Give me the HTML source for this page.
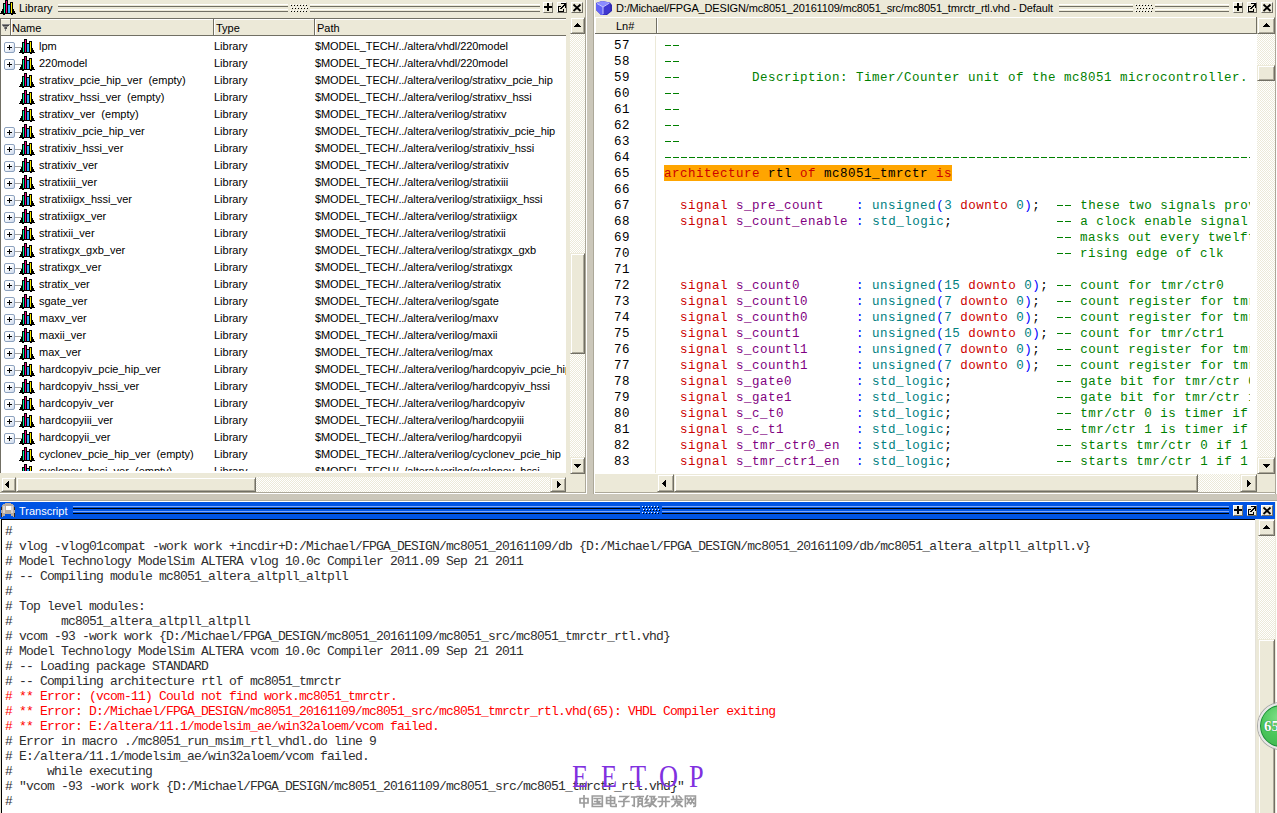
<!DOCTYPE html><html><head><meta charset="utf-8"><style>
html,body{margin:0;padding:0}
body{width:1277px;height:813px;position:relative;overflow:hidden;background:#ECE9D8;font-family:"Liberation Sans",sans-serif}
.s{position:absolute;font-family:"Liberation Sans",sans-serif;font-size:11px;line-height:13px;white-space:pre;color:#000}
.m{position:absolute;font-family:"Liberation Mono",monospace;font-size:12.5px;letter-spacing:0.5px;line-height:16px;white-space:pre}
.t{position:absolute;font-family:"Liberation Mono",monospace;font-size:13px;letter-spacing:-0.8px;line-height:15px;white-space:pre;color:#2e2e2e}
.btn{position:absolute;box-sizing:border-box;background:#ECE9D8;border-style:solid;border-width:1px;border-color:#ECE9D8 #716F64 #716F64 #ECE9D8;box-shadow:inset 1px 1px 0 #fff,inset -1px -1px 0 #ACA899}
.track{background-color:#F4F2EA;background-image:repeating-conic-gradient(#ECE9D8 0 25%,#fff 0 50%);background-size:2px 2px}
.dash{display:inline-block;vertical-align:top;height:15px;background:repeating-linear-gradient(to right,transparent 0 1px,#008000 1px 7px,transparent 7px 8px) 0 7px/8px 1px repeat-x}
.kw{color:#CC0000}.id{color:#800080}.ty{color:#008080}.op{color:#0000FF}.cm{color:#008000}.bk{color:#000}
</style></head><body>
<svg style="position:absolute;left:0px;top:0px" width="16" height="16" shape-rendering="crispEdges"><rect x="3" y="3" width="3" height="10" fill="#000"/><rect x="5" y="0" width="3" height="13" fill="#000"/><rect x="7" y="4" width="4" height="9" fill="#000"/><rect x="10" y="2" width="3" height="11" fill="#000"/><rect x="2" y="9" width="12" height="4" fill="#000"/><rect x="1" y="11" width="14" height="2" fill="#000"/><rect x="0" y="13" width="16" height="1" fill="#000"/><rect x="3" y="14" width="2" height="1" fill="#000"/><rect x="11" y="14" width="2" height="1" fill="#000"/><rect x="4" y="4" width="1" height="9" fill="#00F0A0"/><rect x="6" y="1" width="1" height="12" fill="#F0007F"/><rect x="8" y="5" width="2" height="8" fill="#30A8F8"/><rect x="11" y="3" width="1" height="10" fill="#FFF000"/></svg>
<div class="s" style="left:19px;top:2px;">Library</div>
<div style="position:absolute;left:58px;top:4px;width:230px;height:1px;background:#FFFFFF;"></div>
<div style="position:absolute;left:58px;top:6px;width:230px;height:1px;background:#716F64;"></div>
<div style="position:absolute;left:58px;top:9px;width:230px;height:1px;background:#FFFFFF;"></div>
<div style="position:absolute;left:58px;top:11px;width:230px;height:1px;background:#716F64;"></div>
<div style="position:absolute;left:310px;top:4px;width:230px;height:1px;background:#FFFFFF;"></div>
<div style="position:absolute;left:310px;top:6px;width:230px;height:1px;background:#716F64;"></div>
<div style="position:absolute;left:310px;top:9px;width:230px;height:1px;background:#FFFFFF;"></div>
<div style="position:absolute;left:310px;top:11px;width:230px;height:1px;background:#716F64;"></div>
<div style="position:absolute;left:290px;top:4px;width:1px;height:1px;background:#fff;"></div>
<div style="position:absolute;left:291px;top:5px;width:1px;height:1px;background:#000;"></div>
<div style="position:absolute;left:293px;top:4px;width:1px;height:1px;background:#fff;"></div>
<div style="position:absolute;left:294px;top:5px;width:1px;height:1px;background:#000;"></div>
<div style="position:absolute;left:296px;top:4px;width:1px;height:1px;background:#fff;"></div>
<div style="position:absolute;left:297px;top:5px;width:1px;height:1px;background:#000;"></div>
<div style="position:absolute;left:299px;top:4px;width:1px;height:1px;background:#fff;"></div>
<div style="position:absolute;left:300px;top:5px;width:1px;height:1px;background:#000;"></div>
<div style="position:absolute;left:302px;top:4px;width:1px;height:1px;background:#fff;"></div>
<div style="position:absolute;left:303px;top:5px;width:1px;height:1px;background:#000;"></div>
<div style="position:absolute;left:305px;top:4px;width:1px;height:1px;background:#fff;"></div>
<div style="position:absolute;left:306px;top:5px;width:1px;height:1px;background:#000;"></div>
<div style="position:absolute;left:291px;top:7px;width:1px;height:1px;background:#fff;"></div>
<div style="position:absolute;left:292px;top:8px;width:1px;height:1px;background:#000;"></div>
<div style="position:absolute;left:294px;top:7px;width:1px;height:1px;background:#fff;"></div>
<div style="position:absolute;left:295px;top:8px;width:1px;height:1px;background:#000;"></div>
<div style="position:absolute;left:297px;top:7px;width:1px;height:1px;background:#fff;"></div>
<div style="position:absolute;left:298px;top:8px;width:1px;height:1px;background:#000;"></div>
<div style="position:absolute;left:300px;top:7px;width:1px;height:1px;background:#fff;"></div>
<div style="position:absolute;left:301px;top:8px;width:1px;height:1px;background:#000;"></div>
<div style="position:absolute;left:303px;top:7px;width:1px;height:1px;background:#fff;"></div>
<div style="position:absolute;left:304px;top:8px;width:1px;height:1px;background:#000;"></div>
<div style="position:absolute;left:306px;top:7px;width:1px;height:1px;background:#fff;"></div>
<div style="position:absolute;left:307px;top:8px;width:1px;height:1px;background:#000;"></div>
<div style="position:absolute;left:290px;top:10px;width:1px;height:1px;background:#fff;"></div>
<div style="position:absolute;left:291px;top:11px;width:1px;height:1px;background:#000;"></div>
<div style="position:absolute;left:293px;top:10px;width:1px;height:1px;background:#fff;"></div>
<div style="position:absolute;left:294px;top:11px;width:1px;height:1px;background:#000;"></div>
<div style="position:absolute;left:296px;top:10px;width:1px;height:1px;background:#fff;"></div>
<div style="position:absolute;left:297px;top:11px;width:1px;height:1px;background:#000;"></div>
<div style="position:absolute;left:299px;top:10px;width:1px;height:1px;background:#fff;"></div>
<div style="position:absolute;left:300px;top:11px;width:1px;height:1px;background:#000;"></div>
<div style="position:absolute;left:302px;top:10px;width:1px;height:1px;background:#fff;"></div>
<div style="position:absolute;left:303px;top:11px;width:1px;height:1px;background:#000;"></div>
<div style="position:absolute;left:305px;top:10px;width:1px;height:1px;background:#fff;"></div>
<div style="position:absolute;left:306px;top:11px;width:1px;height:1px;background:#000;"></div>
<div style="position:absolute;left:543px;top:2px;width:10px;height:11px;box-sizing:border-box;background:#ECE9D8;border-top:1px solid #fff;border-left:1px solid #fff;border-right:1px solid #716F64;border-bottom:1px solid #716F64"></div>
<div style="position:absolute;left:544px;top:6px;width:8px;height:2px;background:#000;"></div>
<div style="position:absolute;left:547px;top:3px;width:2px;height:8px;background:#000;"></div>
<div style="position:absolute;left:557px;top:2px;width:10px;height:11px;box-sizing:border-box;background:#ECE9D8;border-top:1px solid #fff;border-left:1px solid #fff;border-right:1px solid #716F64;border-bottom:1px solid #716F64"></div>
<svg style="position:absolute;left:557px;top:2px" width="10" height="11" shape-rendering="crispEdges"><path d="M1 4h3v1h-2v4h4v-2h1v3h-6z" fill="#000"/><rect x="1" y="4" width="1" height="6" fill="#000"/><rect x="1" y="9" width="6" height="1" fill="#000"/><rect x="3" y="6" width="1" height="1" fill="#000"/><path d="M4 1h5v5h-1v-3l-4 4v-1l3-4h-3z" fill="#000"/><rect x="7" y="1" width="2" height="2" fill="#000"/></svg>
<div style="position:absolute;left:571px;top:2px;width:12px;height:11px;box-sizing:border-box;background:#ECE9D8;border-top:1px solid #fff;border-left:1px solid #fff;border-right:1px solid #716F64;border-bottom:1px solid #716F64"></div>
<svg style="position:absolute;left:571px;top:2px" width="12" height="11"><path d="M2.5 2.5 L9.5 9 M9.5 2.5 L2.5 9" stroke="#000" stroke-width="1.8"/></svg>
<div style="position:absolute;left:1px;top:19px;width:565px;height:454px;background:#fff;"></div>
<div style="position:absolute;left:0px;top:18px;width:1px;height:455px;background:#716F64;"></div>
<div style="position:absolute;left:1px;top:18px;width:565px;height:18px;background:#ECE9D8;"></div>
<div style="position:absolute;left:0px;top:18px;width:566px;height:1px;background:#716F64;"></div>
<div style="position:absolute;left:1px;top:19px;width:565px;height:1px;background:#fff;"></div>
<div style="position:absolute;left:1px;top:35px;width:565px;height:1px;background:#716F64;"></div>
<div style="position:absolute;left:10px;top:19px;width:1px;height:16px;background:#716F64;"></div>
<div style="position:absolute;left:11px;top:20px;width:1px;height:15px;background:#fff;"></div>
<div style="position:absolute;left:213px;top:19px;width:1px;height:16px;background:#716F64;"></div>
<div style="position:absolute;left:214px;top:20px;width:1px;height:15px;background:#fff;"></div>
<div style="position:absolute;left:314px;top:19px;width:1px;height:16px;background:#716F64;"></div>
<div style="position:absolute;left:315px;top:20px;width:1px;height:15px;background:#fff;"></div>
<svg style="position:absolute;left:2px;top:24px" width="8" height="7" shape-rendering="crispEdges"><path d="M0 0H8V1H7V2H6V3H5V5H4V7H3V5H2V3H1V2H0Z" fill="#8A8A8A"/><rect x="1" y="1" width="6" height="1" fill="#444"/><rect x="3" y="3" width="2" height="2" fill="#555"/></svg>
<div class="s" style="left:12px;top:22px;">Name</div>
<div class="s" style="left:216px;top:22px;">Type</div>
<div class="s" style="left:317px;top:22px;">Path</div>
<div style="position:absolute;left:1px;top:36px;width:565px;height:435px;overflow:hidden">
<div style="position:absolute;left:3px;top:6px;width:11px;height:11px;box-sizing:border-box;border:1px solid #8DA2BF;border-radius:2px;background:linear-gradient(135deg,#fff 35%,#C9D6EA)"></div>
<div style="position:absolute;left:6px;top:11px;width:5px;height:1px;background:#000;"></div>
<div style="position:absolute;left:8px;top:9px;width:1px;height:5px;background:#000;"></div>
<div style="position:absolute;left:14px;top:11px;width:7px;height:1px;background:#A0A0A0;"></div>
<svg style="position:absolute;left:18px;top:3px" width="16" height="16" shape-rendering="crispEdges"><rect x="3" y="3" width="3" height="10" fill="#000"/><rect x="5" y="0" width="3" height="13" fill="#000"/><rect x="7" y="4" width="4" height="9" fill="#000"/><rect x="10" y="2" width="3" height="11" fill="#000"/><rect x="2" y="9" width="12" height="4" fill="#000"/><rect x="1" y="11" width="14" height="2" fill="#000"/><rect x="0" y="13" width="16" height="1" fill="#000"/><rect x="3" y="14" width="2" height="1" fill="#000"/><rect x="11" y="14" width="2" height="1" fill="#000"/><rect x="4" y="4" width="1" height="9" fill="#00F0A0"/><rect x="6" y="1" width="1" height="12" fill="#F0007F"/><rect x="8" y="5" width="2" height="8" fill="#30A8F8"/><rect x="11" y="3" width="1" height="10" fill="#FFF000"/></svg>
<div class="s" style="left:38px;top:4px;">lpm</div>
<div class="s" style="left:213px;top:4px;">Library</div>
<div class="s" style="left:314px;top:4px;letter-spacing:-0.08px">$MODEL_TECH/../altera/vhdl/220model</div>
<div style="position:absolute;left:3px;top:23px;width:11px;height:11px;box-sizing:border-box;border:1px solid #8DA2BF;border-radius:2px;background:linear-gradient(135deg,#fff 35%,#C9D6EA)"></div>
<div style="position:absolute;left:6px;top:28px;width:5px;height:1px;background:#000;"></div>
<div style="position:absolute;left:8px;top:26px;width:1px;height:5px;background:#000;"></div>
<div style="position:absolute;left:14px;top:28px;width:7px;height:1px;background:#A0A0A0;"></div>
<svg style="position:absolute;left:18px;top:20px" width="16" height="16" shape-rendering="crispEdges"><rect x="3" y="3" width="3" height="10" fill="#000"/><rect x="5" y="0" width="3" height="13" fill="#000"/><rect x="7" y="4" width="4" height="9" fill="#000"/><rect x="10" y="2" width="3" height="11" fill="#000"/><rect x="2" y="9" width="12" height="4" fill="#000"/><rect x="1" y="11" width="14" height="2" fill="#000"/><rect x="0" y="13" width="16" height="1" fill="#000"/><rect x="3" y="14" width="2" height="1" fill="#000"/><rect x="11" y="14" width="2" height="1" fill="#000"/><rect x="4" y="4" width="1" height="9" fill="#00F0A0"/><rect x="6" y="1" width="1" height="12" fill="#F0007F"/><rect x="8" y="5" width="2" height="8" fill="#30A8F8"/><rect x="11" y="3" width="1" height="10" fill="#FFF000"/></svg>
<div class="s" style="left:38px;top:21px;">220model</div>
<div class="s" style="left:213px;top:21px;">Library</div>
<div class="s" style="left:314px;top:21px;letter-spacing:-0.08px">$MODEL_TECH/../altera/vhdl/220model</div>
<svg style="position:absolute;left:18px;top:37px" width="16" height="16" shape-rendering="crispEdges"><rect x="3" y="3" width="3" height="10" fill="#000"/><rect x="5" y="0" width="3" height="13" fill="#000"/><rect x="7" y="4" width="4" height="9" fill="#000"/><rect x="10" y="2" width="3" height="11" fill="#000"/><rect x="2" y="9" width="12" height="4" fill="#000"/><rect x="1" y="11" width="14" height="2" fill="#000"/><rect x="0" y="13" width="16" height="1" fill="#000"/><rect x="3" y="14" width="2" height="1" fill="#000"/><rect x="11" y="14" width="2" height="1" fill="#000"/><rect x="4" y="4" width="1" height="9" fill="#00F0A0"/><rect x="6" y="1" width="1" height="12" fill="#F0007F"/><rect x="8" y="5" width="2" height="8" fill="#30A8F8"/><rect x="11" y="3" width="1" height="10" fill="#FFF000"/></svg>
<div class="s" style="left:38px;top:38px;">stratixv_pcie_hip_ver  (empty)</div>
<div class="s" style="left:213px;top:38px;">Library</div>
<div class="s" style="left:314px;top:38px;letter-spacing:-0.08px">$MODEL_TECH/../altera/verilog/stratixv_pcie_hip</div>
<svg style="position:absolute;left:18px;top:54px" width="16" height="16" shape-rendering="crispEdges"><rect x="3" y="3" width="3" height="10" fill="#000"/><rect x="5" y="0" width="3" height="13" fill="#000"/><rect x="7" y="4" width="4" height="9" fill="#000"/><rect x="10" y="2" width="3" height="11" fill="#000"/><rect x="2" y="9" width="12" height="4" fill="#000"/><rect x="1" y="11" width="14" height="2" fill="#000"/><rect x="0" y="13" width="16" height="1" fill="#000"/><rect x="3" y="14" width="2" height="1" fill="#000"/><rect x="11" y="14" width="2" height="1" fill="#000"/><rect x="4" y="4" width="1" height="9" fill="#00F0A0"/><rect x="6" y="1" width="1" height="12" fill="#F0007F"/><rect x="8" y="5" width="2" height="8" fill="#30A8F8"/><rect x="11" y="3" width="1" height="10" fill="#FFF000"/></svg>
<div class="s" style="left:38px;top:55px;">stratixv_hssi_ver  (empty)</div>
<div class="s" style="left:213px;top:55px;">Library</div>
<div class="s" style="left:314px;top:55px;letter-spacing:-0.08px">$MODEL_TECH/../altera/verilog/stratixv_hssi</div>
<svg style="position:absolute;left:18px;top:71px" width="16" height="16" shape-rendering="crispEdges"><rect x="3" y="3" width="3" height="10" fill="#000"/><rect x="5" y="0" width="3" height="13" fill="#000"/><rect x="7" y="4" width="4" height="9" fill="#000"/><rect x="10" y="2" width="3" height="11" fill="#000"/><rect x="2" y="9" width="12" height="4" fill="#000"/><rect x="1" y="11" width="14" height="2" fill="#000"/><rect x="0" y="13" width="16" height="1" fill="#000"/><rect x="3" y="14" width="2" height="1" fill="#000"/><rect x="11" y="14" width="2" height="1" fill="#000"/><rect x="4" y="4" width="1" height="9" fill="#00F0A0"/><rect x="6" y="1" width="1" height="12" fill="#F0007F"/><rect x="8" y="5" width="2" height="8" fill="#30A8F8"/><rect x="11" y="3" width="1" height="10" fill="#FFF000"/></svg>
<div class="s" style="left:38px;top:72px;">stratixv_ver  (empty)</div>
<div class="s" style="left:213px;top:72px;">Library</div>
<div class="s" style="left:314px;top:72px;letter-spacing:-0.08px">$MODEL_TECH/../altera/verilog/stratixv</div>
<div style="position:absolute;left:3px;top:91px;width:11px;height:11px;box-sizing:border-box;border:1px solid #8DA2BF;border-radius:2px;background:linear-gradient(135deg,#fff 35%,#C9D6EA)"></div>
<div style="position:absolute;left:6px;top:96px;width:5px;height:1px;background:#000;"></div>
<div style="position:absolute;left:8px;top:94px;width:1px;height:5px;background:#000;"></div>
<div style="position:absolute;left:14px;top:96px;width:7px;height:1px;background:#A0A0A0;"></div>
<svg style="position:absolute;left:18px;top:88px" width="16" height="16" shape-rendering="crispEdges"><rect x="3" y="3" width="3" height="10" fill="#000"/><rect x="5" y="0" width="3" height="13" fill="#000"/><rect x="7" y="4" width="4" height="9" fill="#000"/><rect x="10" y="2" width="3" height="11" fill="#000"/><rect x="2" y="9" width="12" height="4" fill="#000"/><rect x="1" y="11" width="14" height="2" fill="#000"/><rect x="0" y="13" width="16" height="1" fill="#000"/><rect x="3" y="14" width="2" height="1" fill="#000"/><rect x="11" y="14" width="2" height="1" fill="#000"/><rect x="4" y="4" width="1" height="9" fill="#00F0A0"/><rect x="6" y="1" width="1" height="12" fill="#F0007F"/><rect x="8" y="5" width="2" height="8" fill="#30A8F8"/><rect x="11" y="3" width="1" height="10" fill="#FFF000"/></svg>
<div class="s" style="left:38px;top:89px;">stratixiv_pcie_hip_ver</div>
<div class="s" style="left:213px;top:89px;">Library</div>
<div class="s" style="left:314px;top:89px;letter-spacing:-0.08px">$MODEL_TECH/../altera/verilog/stratixiv_pcie_hip</div>
<div style="position:absolute;left:3px;top:108px;width:11px;height:11px;box-sizing:border-box;border:1px solid #8DA2BF;border-radius:2px;background:linear-gradient(135deg,#fff 35%,#C9D6EA)"></div>
<div style="position:absolute;left:6px;top:113px;width:5px;height:1px;background:#000;"></div>
<div style="position:absolute;left:8px;top:111px;width:1px;height:5px;background:#000;"></div>
<div style="position:absolute;left:14px;top:113px;width:7px;height:1px;background:#A0A0A0;"></div>
<svg style="position:absolute;left:18px;top:105px" width="16" height="16" shape-rendering="crispEdges"><rect x="3" y="3" width="3" height="10" fill="#000"/><rect x="5" y="0" width="3" height="13" fill="#000"/><rect x="7" y="4" width="4" height="9" fill="#000"/><rect x="10" y="2" width="3" height="11" fill="#000"/><rect x="2" y="9" width="12" height="4" fill="#000"/><rect x="1" y="11" width="14" height="2" fill="#000"/><rect x="0" y="13" width="16" height="1" fill="#000"/><rect x="3" y="14" width="2" height="1" fill="#000"/><rect x="11" y="14" width="2" height="1" fill="#000"/><rect x="4" y="4" width="1" height="9" fill="#00F0A0"/><rect x="6" y="1" width="1" height="12" fill="#F0007F"/><rect x="8" y="5" width="2" height="8" fill="#30A8F8"/><rect x="11" y="3" width="1" height="10" fill="#FFF000"/></svg>
<div class="s" style="left:38px;top:106px;">stratixiv_hssi_ver</div>
<div class="s" style="left:213px;top:106px;">Library</div>
<div class="s" style="left:314px;top:106px;letter-spacing:-0.08px">$MODEL_TECH/../altera/verilog/stratixiv_hssi</div>
<div style="position:absolute;left:3px;top:125px;width:11px;height:11px;box-sizing:border-box;border:1px solid #8DA2BF;border-radius:2px;background:linear-gradient(135deg,#fff 35%,#C9D6EA)"></div>
<div style="position:absolute;left:6px;top:130px;width:5px;height:1px;background:#000;"></div>
<div style="position:absolute;left:8px;top:128px;width:1px;height:5px;background:#000;"></div>
<div style="position:absolute;left:14px;top:130px;width:7px;height:1px;background:#A0A0A0;"></div>
<svg style="position:absolute;left:18px;top:122px" width="16" height="16" shape-rendering="crispEdges"><rect x="3" y="3" width="3" height="10" fill="#000"/><rect x="5" y="0" width="3" height="13" fill="#000"/><rect x="7" y="4" width="4" height="9" fill="#000"/><rect x="10" y="2" width="3" height="11" fill="#000"/><rect x="2" y="9" width="12" height="4" fill="#000"/><rect x="1" y="11" width="14" height="2" fill="#000"/><rect x="0" y="13" width="16" height="1" fill="#000"/><rect x="3" y="14" width="2" height="1" fill="#000"/><rect x="11" y="14" width="2" height="1" fill="#000"/><rect x="4" y="4" width="1" height="9" fill="#00F0A0"/><rect x="6" y="1" width="1" height="12" fill="#F0007F"/><rect x="8" y="5" width="2" height="8" fill="#30A8F8"/><rect x="11" y="3" width="1" height="10" fill="#FFF000"/></svg>
<div class="s" style="left:38px;top:123px;">stratixiv_ver</div>
<div class="s" style="left:213px;top:123px;">Library</div>
<div class="s" style="left:314px;top:123px;letter-spacing:-0.08px">$MODEL_TECH/../altera/verilog/stratixiv</div>
<div style="position:absolute;left:3px;top:142px;width:11px;height:11px;box-sizing:border-box;border:1px solid #8DA2BF;border-radius:2px;background:linear-gradient(135deg,#fff 35%,#C9D6EA)"></div>
<div style="position:absolute;left:6px;top:147px;width:5px;height:1px;background:#000;"></div>
<div style="position:absolute;left:8px;top:145px;width:1px;height:5px;background:#000;"></div>
<div style="position:absolute;left:14px;top:147px;width:7px;height:1px;background:#A0A0A0;"></div>
<svg style="position:absolute;left:18px;top:139px" width="16" height="16" shape-rendering="crispEdges"><rect x="3" y="3" width="3" height="10" fill="#000"/><rect x="5" y="0" width="3" height="13" fill="#000"/><rect x="7" y="4" width="4" height="9" fill="#000"/><rect x="10" y="2" width="3" height="11" fill="#000"/><rect x="2" y="9" width="12" height="4" fill="#000"/><rect x="1" y="11" width="14" height="2" fill="#000"/><rect x="0" y="13" width="16" height="1" fill="#000"/><rect x="3" y="14" width="2" height="1" fill="#000"/><rect x="11" y="14" width="2" height="1" fill="#000"/><rect x="4" y="4" width="1" height="9" fill="#00F0A0"/><rect x="6" y="1" width="1" height="12" fill="#F0007F"/><rect x="8" y="5" width="2" height="8" fill="#30A8F8"/><rect x="11" y="3" width="1" height="10" fill="#FFF000"/></svg>
<div class="s" style="left:38px;top:140px;">stratixiii_ver</div>
<div class="s" style="left:213px;top:140px;">Library</div>
<div class="s" style="left:314px;top:140px;letter-spacing:-0.08px">$MODEL_TECH/../altera/verilog/stratixiii</div>
<div style="position:absolute;left:3px;top:159px;width:11px;height:11px;box-sizing:border-box;border:1px solid #8DA2BF;border-radius:2px;background:linear-gradient(135deg,#fff 35%,#C9D6EA)"></div>
<div style="position:absolute;left:6px;top:164px;width:5px;height:1px;background:#000;"></div>
<div style="position:absolute;left:8px;top:162px;width:1px;height:5px;background:#000;"></div>
<div style="position:absolute;left:14px;top:164px;width:7px;height:1px;background:#A0A0A0;"></div>
<svg style="position:absolute;left:18px;top:156px" width="16" height="16" shape-rendering="crispEdges"><rect x="3" y="3" width="3" height="10" fill="#000"/><rect x="5" y="0" width="3" height="13" fill="#000"/><rect x="7" y="4" width="4" height="9" fill="#000"/><rect x="10" y="2" width="3" height="11" fill="#000"/><rect x="2" y="9" width="12" height="4" fill="#000"/><rect x="1" y="11" width="14" height="2" fill="#000"/><rect x="0" y="13" width="16" height="1" fill="#000"/><rect x="3" y="14" width="2" height="1" fill="#000"/><rect x="11" y="14" width="2" height="1" fill="#000"/><rect x="4" y="4" width="1" height="9" fill="#00F0A0"/><rect x="6" y="1" width="1" height="12" fill="#F0007F"/><rect x="8" y="5" width="2" height="8" fill="#30A8F8"/><rect x="11" y="3" width="1" height="10" fill="#FFF000"/></svg>
<div class="s" style="left:38px;top:157px;">stratixiigx_hssi_ver</div>
<div class="s" style="left:213px;top:157px;">Library</div>
<div class="s" style="left:314px;top:157px;letter-spacing:-0.08px">$MODEL_TECH/../altera/verilog/stratixiigx_hssi</div>
<div style="position:absolute;left:3px;top:176px;width:11px;height:11px;box-sizing:border-box;border:1px solid #8DA2BF;border-radius:2px;background:linear-gradient(135deg,#fff 35%,#C9D6EA)"></div>
<div style="position:absolute;left:6px;top:181px;width:5px;height:1px;background:#000;"></div>
<div style="position:absolute;left:8px;top:179px;width:1px;height:5px;background:#000;"></div>
<div style="position:absolute;left:14px;top:181px;width:7px;height:1px;background:#A0A0A0;"></div>
<svg style="position:absolute;left:18px;top:173px" width="16" height="16" shape-rendering="crispEdges"><rect x="3" y="3" width="3" height="10" fill="#000"/><rect x="5" y="0" width="3" height="13" fill="#000"/><rect x="7" y="4" width="4" height="9" fill="#000"/><rect x="10" y="2" width="3" height="11" fill="#000"/><rect x="2" y="9" width="12" height="4" fill="#000"/><rect x="1" y="11" width="14" height="2" fill="#000"/><rect x="0" y="13" width="16" height="1" fill="#000"/><rect x="3" y="14" width="2" height="1" fill="#000"/><rect x="11" y="14" width="2" height="1" fill="#000"/><rect x="4" y="4" width="1" height="9" fill="#00F0A0"/><rect x="6" y="1" width="1" height="12" fill="#F0007F"/><rect x="8" y="5" width="2" height="8" fill="#30A8F8"/><rect x="11" y="3" width="1" height="10" fill="#FFF000"/></svg>
<div class="s" style="left:38px;top:174px;">stratixiigx_ver</div>
<div class="s" style="left:213px;top:174px;">Library</div>
<div class="s" style="left:314px;top:174px;letter-spacing:-0.08px">$MODEL_TECH/../altera/verilog/stratixiigx</div>
<div style="position:absolute;left:3px;top:193px;width:11px;height:11px;box-sizing:border-box;border:1px solid #8DA2BF;border-radius:2px;background:linear-gradient(135deg,#fff 35%,#C9D6EA)"></div>
<div style="position:absolute;left:6px;top:198px;width:5px;height:1px;background:#000;"></div>
<div style="position:absolute;left:8px;top:196px;width:1px;height:5px;background:#000;"></div>
<div style="position:absolute;left:14px;top:198px;width:7px;height:1px;background:#A0A0A0;"></div>
<svg style="position:absolute;left:18px;top:190px" width="16" height="16" shape-rendering="crispEdges"><rect x="3" y="3" width="3" height="10" fill="#000"/><rect x="5" y="0" width="3" height="13" fill="#000"/><rect x="7" y="4" width="4" height="9" fill="#000"/><rect x="10" y="2" width="3" height="11" fill="#000"/><rect x="2" y="9" width="12" height="4" fill="#000"/><rect x="1" y="11" width="14" height="2" fill="#000"/><rect x="0" y="13" width="16" height="1" fill="#000"/><rect x="3" y="14" width="2" height="1" fill="#000"/><rect x="11" y="14" width="2" height="1" fill="#000"/><rect x="4" y="4" width="1" height="9" fill="#00F0A0"/><rect x="6" y="1" width="1" height="12" fill="#F0007F"/><rect x="8" y="5" width="2" height="8" fill="#30A8F8"/><rect x="11" y="3" width="1" height="10" fill="#FFF000"/></svg>
<div class="s" style="left:38px;top:191px;">stratixii_ver</div>
<div class="s" style="left:213px;top:191px;">Library</div>
<div class="s" style="left:314px;top:191px;letter-spacing:-0.08px">$MODEL_TECH/../altera/verilog/stratixii</div>
<div style="position:absolute;left:3px;top:210px;width:11px;height:11px;box-sizing:border-box;border:1px solid #8DA2BF;border-radius:2px;background:linear-gradient(135deg,#fff 35%,#C9D6EA)"></div>
<div style="position:absolute;left:6px;top:215px;width:5px;height:1px;background:#000;"></div>
<div style="position:absolute;left:8px;top:213px;width:1px;height:5px;background:#000;"></div>
<div style="position:absolute;left:14px;top:215px;width:7px;height:1px;background:#A0A0A0;"></div>
<svg style="position:absolute;left:18px;top:207px" width="16" height="16" shape-rendering="crispEdges"><rect x="3" y="3" width="3" height="10" fill="#000"/><rect x="5" y="0" width="3" height="13" fill="#000"/><rect x="7" y="4" width="4" height="9" fill="#000"/><rect x="10" y="2" width="3" height="11" fill="#000"/><rect x="2" y="9" width="12" height="4" fill="#000"/><rect x="1" y="11" width="14" height="2" fill="#000"/><rect x="0" y="13" width="16" height="1" fill="#000"/><rect x="3" y="14" width="2" height="1" fill="#000"/><rect x="11" y="14" width="2" height="1" fill="#000"/><rect x="4" y="4" width="1" height="9" fill="#00F0A0"/><rect x="6" y="1" width="1" height="12" fill="#F0007F"/><rect x="8" y="5" width="2" height="8" fill="#30A8F8"/><rect x="11" y="3" width="1" height="10" fill="#FFF000"/></svg>
<div class="s" style="left:38px;top:208px;">stratixgx_gxb_ver</div>
<div class="s" style="left:213px;top:208px;">Library</div>
<div class="s" style="left:314px;top:208px;letter-spacing:-0.08px">$MODEL_TECH/../altera/verilog/stratixgx_gxb</div>
<div style="position:absolute;left:3px;top:227px;width:11px;height:11px;box-sizing:border-box;border:1px solid #8DA2BF;border-radius:2px;background:linear-gradient(135deg,#fff 35%,#C9D6EA)"></div>
<div style="position:absolute;left:6px;top:232px;width:5px;height:1px;background:#000;"></div>
<div style="position:absolute;left:8px;top:230px;width:1px;height:5px;background:#000;"></div>
<div style="position:absolute;left:14px;top:232px;width:7px;height:1px;background:#A0A0A0;"></div>
<svg style="position:absolute;left:18px;top:224px" width="16" height="16" shape-rendering="crispEdges"><rect x="3" y="3" width="3" height="10" fill="#000"/><rect x="5" y="0" width="3" height="13" fill="#000"/><rect x="7" y="4" width="4" height="9" fill="#000"/><rect x="10" y="2" width="3" height="11" fill="#000"/><rect x="2" y="9" width="12" height="4" fill="#000"/><rect x="1" y="11" width="14" height="2" fill="#000"/><rect x="0" y="13" width="16" height="1" fill="#000"/><rect x="3" y="14" width="2" height="1" fill="#000"/><rect x="11" y="14" width="2" height="1" fill="#000"/><rect x="4" y="4" width="1" height="9" fill="#00F0A0"/><rect x="6" y="1" width="1" height="12" fill="#F0007F"/><rect x="8" y="5" width="2" height="8" fill="#30A8F8"/><rect x="11" y="3" width="1" height="10" fill="#FFF000"/></svg>
<div class="s" style="left:38px;top:225px;">stratixgx_ver</div>
<div class="s" style="left:213px;top:225px;">Library</div>
<div class="s" style="left:314px;top:225px;letter-spacing:-0.08px">$MODEL_TECH/../altera/verilog/stratixgx</div>
<div style="position:absolute;left:3px;top:244px;width:11px;height:11px;box-sizing:border-box;border:1px solid #8DA2BF;border-radius:2px;background:linear-gradient(135deg,#fff 35%,#C9D6EA)"></div>
<div style="position:absolute;left:6px;top:249px;width:5px;height:1px;background:#000;"></div>
<div style="position:absolute;left:8px;top:247px;width:1px;height:5px;background:#000;"></div>
<div style="position:absolute;left:14px;top:249px;width:7px;height:1px;background:#A0A0A0;"></div>
<svg style="position:absolute;left:18px;top:241px" width="16" height="16" shape-rendering="crispEdges"><rect x="3" y="3" width="3" height="10" fill="#000"/><rect x="5" y="0" width="3" height="13" fill="#000"/><rect x="7" y="4" width="4" height="9" fill="#000"/><rect x="10" y="2" width="3" height="11" fill="#000"/><rect x="2" y="9" width="12" height="4" fill="#000"/><rect x="1" y="11" width="14" height="2" fill="#000"/><rect x="0" y="13" width="16" height="1" fill="#000"/><rect x="3" y="14" width="2" height="1" fill="#000"/><rect x="11" y="14" width="2" height="1" fill="#000"/><rect x="4" y="4" width="1" height="9" fill="#00F0A0"/><rect x="6" y="1" width="1" height="12" fill="#F0007F"/><rect x="8" y="5" width="2" height="8" fill="#30A8F8"/><rect x="11" y="3" width="1" height="10" fill="#FFF000"/></svg>
<div class="s" style="left:38px;top:242px;">stratix_ver</div>
<div class="s" style="left:213px;top:242px;">Library</div>
<div class="s" style="left:314px;top:242px;letter-spacing:-0.08px">$MODEL_TECH/../altera/verilog/stratix</div>
<div style="position:absolute;left:3px;top:261px;width:11px;height:11px;box-sizing:border-box;border:1px solid #8DA2BF;border-radius:2px;background:linear-gradient(135deg,#fff 35%,#C9D6EA)"></div>
<div style="position:absolute;left:6px;top:266px;width:5px;height:1px;background:#000;"></div>
<div style="position:absolute;left:8px;top:264px;width:1px;height:5px;background:#000;"></div>
<div style="position:absolute;left:14px;top:266px;width:7px;height:1px;background:#A0A0A0;"></div>
<svg style="position:absolute;left:18px;top:258px" width="16" height="16" shape-rendering="crispEdges"><rect x="3" y="3" width="3" height="10" fill="#000"/><rect x="5" y="0" width="3" height="13" fill="#000"/><rect x="7" y="4" width="4" height="9" fill="#000"/><rect x="10" y="2" width="3" height="11" fill="#000"/><rect x="2" y="9" width="12" height="4" fill="#000"/><rect x="1" y="11" width="14" height="2" fill="#000"/><rect x="0" y="13" width="16" height="1" fill="#000"/><rect x="3" y="14" width="2" height="1" fill="#000"/><rect x="11" y="14" width="2" height="1" fill="#000"/><rect x="4" y="4" width="1" height="9" fill="#00F0A0"/><rect x="6" y="1" width="1" height="12" fill="#F0007F"/><rect x="8" y="5" width="2" height="8" fill="#30A8F8"/><rect x="11" y="3" width="1" height="10" fill="#FFF000"/></svg>
<div class="s" style="left:38px;top:259px;">sgate_ver</div>
<div class="s" style="left:213px;top:259px;">Library</div>
<div class="s" style="left:314px;top:259px;letter-spacing:-0.08px">$MODEL_TECH/../altera/verilog/sgate</div>
<div style="position:absolute;left:3px;top:278px;width:11px;height:11px;box-sizing:border-box;border:1px solid #8DA2BF;border-radius:2px;background:linear-gradient(135deg,#fff 35%,#C9D6EA)"></div>
<div style="position:absolute;left:6px;top:283px;width:5px;height:1px;background:#000;"></div>
<div style="position:absolute;left:8px;top:281px;width:1px;height:5px;background:#000;"></div>
<div style="position:absolute;left:14px;top:283px;width:7px;height:1px;background:#A0A0A0;"></div>
<svg style="position:absolute;left:18px;top:275px" width="16" height="16" shape-rendering="crispEdges"><rect x="3" y="3" width="3" height="10" fill="#000"/><rect x="5" y="0" width="3" height="13" fill="#000"/><rect x="7" y="4" width="4" height="9" fill="#000"/><rect x="10" y="2" width="3" height="11" fill="#000"/><rect x="2" y="9" width="12" height="4" fill="#000"/><rect x="1" y="11" width="14" height="2" fill="#000"/><rect x="0" y="13" width="16" height="1" fill="#000"/><rect x="3" y="14" width="2" height="1" fill="#000"/><rect x="11" y="14" width="2" height="1" fill="#000"/><rect x="4" y="4" width="1" height="9" fill="#00F0A0"/><rect x="6" y="1" width="1" height="12" fill="#F0007F"/><rect x="8" y="5" width="2" height="8" fill="#30A8F8"/><rect x="11" y="3" width="1" height="10" fill="#FFF000"/></svg>
<div class="s" style="left:38px;top:276px;">maxv_ver</div>
<div class="s" style="left:213px;top:276px;">Library</div>
<div class="s" style="left:314px;top:276px;letter-spacing:-0.08px">$MODEL_TECH/../altera/verilog/maxv</div>
<div style="position:absolute;left:3px;top:295px;width:11px;height:11px;box-sizing:border-box;border:1px solid #8DA2BF;border-radius:2px;background:linear-gradient(135deg,#fff 35%,#C9D6EA)"></div>
<div style="position:absolute;left:6px;top:300px;width:5px;height:1px;background:#000;"></div>
<div style="position:absolute;left:8px;top:298px;width:1px;height:5px;background:#000;"></div>
<div style="position:absolute;left:14px;top:300px;width:7px;height:1px;background:#A0A0A0;"></div>
<svg style="position:absolute;left:18px;top:292px" width="16" height="16" shape-rendering="crispEdges"><rect x="3" y="3" width="3" height="10" fill="#000"/><rect x="5" y="0" width="3" height="13" fill="#000"/><rect x="7" y="4" width="4" height="9" fill="#000"/><rect x="10" y="2" width="3" height="11" fill="#000"/><rect x="2" y="9" width="12" height="4" fill="#000"/><rect x="1" y="11" width="14" height="2" fill="#000"/><rect x="0" y="13" width="16" height="1" fill="#000"/><rect x="3" y="14" width="2" height="1" fill="#000"/><rect x="11" y="14" width="2" height="1" fill="#000"/><rect x="4" y="4" width="1" height="9" fill="#00F0A0"/><rect x="6" y="1" width="1" height="12" fill="#F0007F"/><rect x="8" y="5" width="2" height="8" fill="#30A8F8"/><rect x="11" y="3" width="1" height="10" fill="#FFF000"/></svg>
<div class="s" style="left:38px;top:293px;">maxii_ver</div>
<div class="s" style="left:213px;top:293px;">Library</div>
<div class="s" style="left:314px;top:293px;letter-spacing:-0.08px">$MODEL_TECH/../altera/verilog/maxii</div>
<div style="position:absolute;left:3px;top:312px;width:11px;height:11px;box-sizing:border-box;border:1px solid #8DA2BF;border-radius:2px;background:linear-gradient(135deg,#fff 35%,#C9D6EA)"></div>
<div style="position:absolute;left:6px;top:317px;width:5px;height:1px;background:#000;"></div>
<div style="position:absolute;left:8px;top:315px;width:1px;height:5px;background:#000;"></div>
<div style="position:absolute;left:14px;top:317px;width:7px;height:1px;background:#A0A0A0;"></div>
<svg style="position:absolute;left:18px;top:309px" width="16" height="16" shape-rendering="crispEdges"><rect x="3" y="3" width="3" height="10" fill="#000"/><rect x="5" y="0" width="3" height="13" fill="#000"/><rect x="7" y="4" width="4" height="9" fill="#000"/><rect x="10" y="2" width="3" height="11" fill="#000"/><rect x="2" y="9" width="12" height="4" fill="#000"/><rect x="1" y="11" width="14" height="2" fill="#000"/><rect x="0" y="13" width="16" height="1" fill="#000"/><rect x="3" y="14" width="2" height="1" fill="#000"/><rect x="11" y="14" width="2" height="1" fill="#000"/><rect x="4" y="4" width="1" height="9" fill="#00F0A0"/><rect x="6" y="1" width="1" height="12" fill="#F0007F"/><rect x="8" y="5" width="2" height="8" fill="#30A8F8"/><rect x="11" y="3" width="1" height="10" fill="#FFF000"/></svg>
<div class="s" style="left:38px;top:310px;">max_ver</div>
<div class="s" style="left:213px;top:310px;">Library</div>
<div class="s" style="left:314px;top:310px;letter-spacing:-0.08px">$MODEL_TECH/../altera/verilog/max</div>
<div style="position:absolute;left:3px;top:329px;width:11px;height:11px;box-sizing:border-box;border:1px solid #8DA2BF;border-radius:2px;background:linear-gradient(135deg,#fff 35%,#C9D6EA)"></div>
<div style="position:absolute;left:6px;top:334px;width:5px;height:1px;background:#000;"></div>
<div style="position:absolute;left:8px;top:332px;width:1px;height:5px;background:#000;"></div>
<div style="position:absolute;left:14px;top:334px;width:7px;height:1px;background:#A0A0A0;"></div>
<svg style="position:absolute;left:18px;top:326px" width="16" height="16" shape-rendering="crispEdges"><rect x="3" y="3" width="3" height="10" fill="#000"/><rect x="5" y="0" width="3" height="13" fill="#000"/><rect x="7" y="4" width="4" height="9" fill="#000"/><rect x="10" y="2" width="3" height="11" fill="#000"/><rect x="2" y="9" width="12" height="4" fill="#000"/><rect x="1" y="11" width="14" height="2" fill="#000"/><rect x="0" y="13" width="16" height="1" fill="#000"/><rect x="3" y="14" width="2" height="1" fill="#000"/><rect x="11" y="14" width="2" height="1" fill="#000"/><rect x="4" y="4" width="1" height="9" fill="#00F0A0"/><rect x="6" y="1" width="1" height="12" fill="#F0007F"/><rect x="8" y="5" width="2" height="8" fill="#30A8F8"/><rect x="11" y="3" width="1" height="10" fill="#FFF000"/></svg>
<div class="s" style="left:38px;top:327px;">hardcopyiv_pcie_hip_ver</div>
<div class="s" style="left:213px;top:327px;">Library</div>
<div class="s" style="left:314px;top:327px;letter-spacing:-0.08px">$MODEL_TECH/../altera/verilog/hardcopyiv_pcie_hip</div>
<div style="position:absolute;left:3px;top:346px;width:11px;height:11px;box-sizing:border-box;border:1px solid #8DA2BF;border-radius:2px;background:linear-gradient(135deg,#fff 35%,#C9D6EA)"></div>
<div style="position:absolute;left:6px;top:351px;width:5px;height:1px;background:#000;"></div>
<div style="position:absolute;left:8px;top:349px;width:1px;height:5px;background:#000;"></div>
<div style="position:absolute;left:14px;top:351px;width:7px;height:1px;background:#A0A0A0;"></div>
<svg style="position:absolute;left:18px;top:343px" width="16" height="16" shape-rendering="crispEdges"><rect x="3" y="3" width="3" height="10" fill="#000"/><rect x="5" y="0" width="3" height="13" fill="#000"/><rect x="7" y="4" width="4" height="9" fill="#000"/><rect x="10" y="2" width="3" height="11" fill="#000"/><rect x="2" y="9" width="12" height="4" fill="#000"/><rect x="1" y="11" width="14" height="2" fill="#000"/><rect x="0" y="13" width="16" height="1" fill="#000"/><rect x="3" y="14" width="2" height="1" fill="#000"/><rect x="11" y="14" width="2" height="1" fill="#000"/><rect x="4" y="4" width="1" height="9" fill="#00F0A0"/><rect x="6" y="1" width="1" height="12" fill="#F0007F"/><rect x="8" y="5" width="2" height="8" fill="#30A8F8"/><rect x="11" y="3" width="1" height="10" fill="#FFF000"/></svg>
<div class="s" style="left:38px;top:344px;">hardcopyiv_hssi_ver</div>
<div class="s" style="left:213px;top:344px;">Library</div>
<div class="s" style="left:314px;top:344px;letter-spacing:-0.08px">$MODEL_TECH/../altera/verilog/hardcopyiv_hssi</div>
<div style="position:absolute;left:3px;top:363px;width:11px;height:11px;box-sizing:border-box;border:1px solid #8DA2BF;border-radius:2px;background:linear-gradient(135deg,#fff 35%,#C9D6EA)"></div>
<div style="position:absolute;left:6px;top:368px;width:5px;height:1px;background:#000;"></div>
<div style="position:absolute;left:8px;top:366px;width:1px;height:5px;background:#000;"></div>
<div style="position:absolute;left:14px;top:368px;width:7px;height:1px;background:#A0A0A0;"></div>
<svg style="position:absolute;left:18px;top:360px" width="16" height="16" shape-rendering="crispEdges"><rect x="3" y="3" width="3" height="10" fill="#000"/><rect x="5" y="0" width="3" height="13" fill="#000"/><rect x="7" y="4" width="4" height="9" fill="#000"/><rect x="10" y="2" width="3" height="11" fill="#000"/><rect x="2" y="9" width="12" height="4" fill="#000"/><rect x="1" y="11" width="14" height="2" fill="#000"/><rect x="0" y="13" width="16" height="1" fill="#000"/><rect x="3" y="14" width="2" height="1" fill="#000"/><rect x="11" y="14" width="2" height="1" fill="#000"/><rect x="4" y="4" width="1" height="9" fill="#00F0A0"/><rect x="6" y="1" width="1" height="12" fill="#F0007F"/><rect x="8" y="5" width="2" height="8" fill="#30A8F8"/><rect x="11" y="3" width="1" height="10" fill="#FFF000"/></svg>
<div class="s" style="left:38px;top:361px;">hardcopyiv_ver</div>
<div class="s" style="left:213px;top:361px;">Library</div>
<div class="s" style="left:314px;top:361px;letter-spacing:-0.08px">$MODEL_TECH/../altera/verilog/hardcopyiv</div>
<div style="position:absolute;left:3px;top:380px;width:11px;height:11px;box-sizing:border-box;border:1px solid #8DA2BF;border-radius:2px;background:linear-gradient(135deg,#fff 35%,#C9D6EA)"></div>
<div style="position:absolute;left:6px;top:385px;width:5px;height:1px;background:#000;"></div>
<div style="position:absolute;left:8px;top:383px;width:1px;height:5px;background:#000;"></div>
<div style="position:absolute;left:14px;top:385px;width:7px;height:1px;background:#A0A0A0;"></div>
<svg style="position:absolute;left:18px;top:377px" width="16" height="16" shape-rendering="crispEdges"><rect x="3" y="3" width="3" height="10" fill="#000"/><rect x="5" y="0" width="3" height="13" fill="#000"/><rect x="7" y="4" width="4" height="9" fill="#000"/><rect x="10" y="2" width="3" height="11" fill="#000"/><rect x="2" y="9" width="12" height="4" fill="#000"/><rect x="1" y="11" width="14" height="2" fill="#000"/><rect x="0" y="13" width="16" height="1" fill="#000"/><rect x="3" y="14" width="2" height="1" fill="#000"/><rect x="11" y="14" width="2" height="1" fill="#000"/><rect x="4" y="4" width="1" height="9" fill="#00F0A0"/><rect x="6" y="1" width="1" height="12" fill="#F0007F"/><rect x="8" y="5" width="2" height="8" fill="#30A8F8"/><rect x="11" y="3" width="1" height="10" fill="#FFF000"/></svg>
<div class="s" style="left:38px;top:378px;">hardcopyiii_ver</div>
<div class="s" style="left:213px;top:378px;">Library</div>
<div class="s" style="left:314px;top:378px;letter-spacing:-0.08px">$MODEL_TECH/../altera/verilog/hardcopyiii</div>
<div style="position:absolute;left:3px;top:397px;width:11px;height:11px;box-sizing:border-box;border:1px solid #8DA2BF;border-radius:2px;background:linear-gradient(135deg,#fff 35%,#C9D6EA)"></div>
<div style="position:absolute;left:6px;top:402px;width:5px;height:1px;background:#000;"></div>
<div style="position:absolute;left:8px;top:400px;width:1px;height:5px;background:#000;"></div>
<div style="position:absolute;left:14px;top:402px;width:7px;height:1px;background:#A0A0A0;"></div>
<svg style="position:absolute;left:18px;top:394px" width="16" height="16" shape-rendering="crispEdges"><rect x="3" y="3" width="3" height="10" fill="#000"/><rect x="5" y="0" width="3" height="13" fill="#000"/><rect x="7" y="4" width="4" height="9" fill="#000"/><rect x="10" y="2" width="3" height="11" fill="#000"/><rect x="2" y="9" width="12" height="4" fill="#000"/><rect x="1" y="11" width="14" height="2" fill="#000"/><rect x="0" y="13" width="16" height="1" fill="#000"/><rect x="3" y="14" width="2" height="1" fill="#000"/><rect x="11" y="14" width="2" height="1" fill="#000"/><rect x="4" y="4" width="1" height="9" fill="#00F0A0"/><rect x="6" y="1" width="1" height="12" fill="#F0007F"/><rect x="8" y="5" width="2" height="8" fill="#30A8F8"/><rect x="11" y="3" width="1" height="10" fill="#FFF000"/></svg>
<div class="s" style="left:38px;top:395px;">hardcopyii_ver</div>
<div class="s" style="left:213px;top:395px;">Library</div>
<div class="s" style="left:314px;top:395px;letter-spacing:-0.08px">$MODEL_TECH/../altera/verilog/hardcopyii</div>
<svg style="position:absolute;left:18px;top:411px" width="16" height="16" shape-rendering="crispEdges"><rect x="3" y="3" width="3" height="10" fill="#000"/><rect x="5" y="0" width="3" height="13" fill="#000"/><rect x="7" y="4" width="4" height="9" fill="#000"/><rect x="10" y="2" width="3" height="11" fill="#000"/><rect x="2" y="9" width="12" height="4" fill="#000"/><rect x="1" y="11" width="14" height="2" fill="#000"/><rect x="0" y="13" width="16" height="1" fill="#000"/><rect x="3" y="14" width="2" height="1" fill="#000"/><rect x="11" y="14" width="2" height="1" fill="#000"/><rect x="4" y="4" width="1" height="9" fill="#00F0A0"/><rect x="6" y="1" width="1" height="12" fill="#F0007F"/><rect x="8" y="5" width="2" height="8" fill="#30A8F8"/><rect x="11" y="3" width="1" height="10" fill="#FFF000"/></svg>
<div class="s" style="left:38px;top:412px;">cyclonev_pcie_hip_ver  (empty)</div>
<div class="s" style="left:213px;top:412px;">Library</div>
<div class="s" style="left:314px;top:412px;letter-spacing:-0.08px">$MODEL_TECH/../altera/verilog/cyclonev_pcie_hip</div>
<svg style="position:absolute;left:18px;top:428px" width="16" height="16" shape-rendering="crispEdges"><rect x="3" y="3" width="3" height="10" fill="#000"/><rect x="5" y="0" width="3" height="13" fill="#000"/><rect x="7" y="4" width="4" height="9" fill="#000"/><rect x="10" y="2" width="3" height="11" fill="#000"/><rect x="2" y="9" width="12" height="4" fill="#000"/><rect x="1" y="11" width="14" height="2" fill="#000"/><rect x="0" y="13" width="16" height="1" fill="#000"/><rect x="3" y="14" width="2" height="1" fill="#000"/><rect x="11" y="14" width="2" height="1" fill="#000"/><rect x="4" y="4" width="1" height="9" fill="#00F0A0"/><rect x="6" y="1" width="1" height="12" fill="#F0007F"/><rect x="8" y="5" width="2" height="8" fill="#30A8F8"/><rect x="11" y="3" width="1" height="10" fill="#FFF000"/></svg>
<div class="s" style="left:38px;top:429px;">cyclonev_hssi_ver  (empty)</div>
<div class="s" style="left:213px;top:429px;">Library</div>
<div class="s" style="left:314px;top:429px;letter-spacing:-0.08px">$MODEL_TECH/../altera/verilog/cyclonev_hssi</div>
</div>
<div class="track" style="position:absolute;left:570px;top:34px;width:15px;height:423px"></div>
<div class="btn" style="left:570px;top:17px;width:15px;height:17px"></div>
<svg style="position:absolute;left:574px;top:23px" width="7" height="4" shape-rendering="crispEdges"><path d="M3 0h1v1h1v1h1v1h1v1H0V3h1V2h1V1h1z" fill="#000"/></svg>
<div class="btn" style="left:570px;top:253px;width:15px;height:101px"></div>
<div class="btn" style="left:570px;top:457px;width:15px;height:17px"></div>
<svg style="position:absolute;left:574px;top:464px" width="7" height="4" shape-rendering="crispEdges"><path d="M0 0h7v1h-1v1h-1v1h-1v1h-1v-1h-1v-1h-1v-1h-1z" fill="#000"/></svg>
<div class="track" style="position:absolute;left:1px;top:477px;width:565px;height:15px"></div>
<div class="btn" style="left:1px;top:477px;width:15px;height:15px"></div>
<svg style="position:absolute;left:5px;top:481px" width="4" height="7" shape-rendering="crispEdges"><path d="M3 0h1v7h-1v-1h-1v-1h-1v-1h-1v-1h1v-1h1v-1h1z" fill="#000"/></svg>
<div class="btn" style="left:16px;top:477px;width:240px;height:15px"></div>
<div class="btn" style="left:550px;top:477px;width:16px;height:15px"></div>
<svg style="position:absolute;left:557px;top:481px" width="4" height="7" shape-rendering="crispEdges"><path d="M0 0h1v1h1v1h1v1h1v1h-1v1h-1v1h-1v1h-1z" fill="#000"/></svg>
<div style="position:absolute;left:585px;top:0px;width:1px;height:494px;background:#ACA899;"></div>
<div style="position:absolute;left:586px;top:0px;width:1px;height:494px;background:#fff;"></div>
<div style="position:absolute;left:587px;top:0px;width:6px;height:502px;background:#CBC7BA;"></div>
<div style="position:absolute;left:593px;top:0px;width:1px;height:494px;background:#ACA899;"></div>
<div style="position:absolute;left:594px;top:0px;width:1px;height:494px;background:#fff;"></div>
<div style="position:absolute;left:0px;top:492px;width:585px;height:1px;background:#ACA899;"></div>
<div style="position:absolute;left:595px;top:492px;width:682px;height:1px;background:#ACA899;"></div>
<div style="position:absolute;left:0px;top:493px;width:586px;height:1px;background:#fff;"></div>
<div style="position:absolute;left:594px;top:493px;width:683px;height:1px;background:#fff;"></div>
<div style="position:absolute;left:0px;top:494px;width:1277px;height:6px;background:#CBC7BA;"></div>
<div style="position:absolute;left:0px;top:500px;width:1277px;height:1px;background:#ACA899;"></div>
<div style="position:absolute;left:0px;top:501px;width:1277px;height:1px;background:#fff;"></div>
<svg style="position:absolute;left:594px;top:0px" width="20" height="17"><path d="M2 3 L8 1 L16 2.5 L18 5 L18 11 L13 15 L7 15 L2 10 Z" fill="#2E28B0"/><path d="M2 3 L8 1 L16 2.5 L9 7 Z" fill="#8C8CFF"/><path d="M2 3 L9 7 L9 15 L7 15 L2 10 Z" fill="#6464F6"/><path d="M9 7 L16 2.5 L16.5 11 L12 14.5 L9 15 Z" fill="#4038D0"/><path d="M3 3.5 L9 7 L15.5 3 M9 7 V14" stroke="#C8C8FF" stroke-width="1" fill="none"/></svg>
<div class="s" style="left:616px;top:2px;letter-spacing:-0.16px">D:/Michael/FPGA_DESIGN/mc8051_20161109/mc8051_src/mc8051_tmrctr_rtl.vhd - Default</div>
<div style="position:absolute;left:1059px;top:4px;width:74px;height:1px;background:#FFFFFF;"></div>
<div style="position:absolute;left:1059px;top:6px;width:74px;height:1px;background:#716F64;"></div>
<div style="position:absolute;left:1059px;top:9px;width:74px;height:1px;background:#FFFFFF;"></div>
<div style="position:absolute;left:1059px;top:11px;width:74px;height:1px;background:#716F64;"></div>
<div style="position:absolute;left:1155px;top:4px;width:74px;height:1px;background:#FFFFFF;"></div>
<div style="position:absolute;left:1155px;top:6px;width:74px;height:1px;background:#716F64;"></div>
<div style="position:absolute;left:1155px;top:9px;width:74px;height:1px;background:#FFFFFF;"></div>
<div style="position:absolute;left:1155px;top:11px;width:74px;height:1px;background:#716F64;"></div>
<div style="position:absolute;left:1135px;top:4px;width:1px;height:1px;background:#fff;"></div>
<div style="position:absolute;left:1136px;top:5px;width:1px;height:1px;background:#000;"></div>
<div style="position:absolute;left:1138px;top:4px;width:1px;height:1px;background:#fff;"></div>
<div style="position:absolute;left:1139px;top:5px;width:1px;height:1px;background:#000;"></div>
<div style="position:absolute;left:1141px;top:4px;width:1px;height:1px;background:#fff;"></div>
<div style="position:absolute;left:1142px;top:5px;width:1px;height:1px;background:#000;"></div>
<div style="position:absolute;left:1144px;top:4px;width:1px;height:1px;background:#fff;"></div>
<div style="position:absolute;left:1145px;top:5px;width:1px;height:1px;background:#000;"></div>
<div style="position:absolute;left:1147px;top:4px;width:1px;height:1px;background:#fff;"></div>
<div style="position:absolute;left:1148px;top:5px;width:1px;height:1px;background:#000;"></div>
<div style="position:absolute;left:1150px;top:4px;width:1px;height:1px;background:#fff;"></div>
<div style="position:absolute;left:1151px;top:5px;width:1px;height:1px;background:#000;"></div>
<div style="position:absolute;left:1136px;top:7px;width:1px;height:1px;background:#fff;"></div>
<div style="position:absolute;left:1137px;top:8px;width:1px;height:1px;background:#000;"></div>
<div style="position:absolute;left:1139px;top:7px;width:1px;height:1px;background:#fff;"></div>
<div style="position:absolute;left:1140px;top:8px;width:1px;height:1px;background:#000;"></div>
<div style="position:absolute;left:1142px;top:7px;width:1px;height:1px;background:#fff;"></div>
<div style="position:absolute;left:1143px;top:8px;width:1px;height:1px;background:#000;"></div>
<div style="position:absolute;left:1145px;top:7px;width:1px;height:1px;background:#fff;"></div>
<div style="position:absolute;left:1146px;top:8px;width:1px;height:1px;background:#000;"></div>
<div style="position:absolute;left:1148px;top:7px;width:1px;height:1px;background:#fff;"></div>
<div style="position:absolute;left:1149px;top:8px;width:1px;height:1px;background:#000;"></div>
<div style="position:absolute;left:1151px;top:7px;width:1px;height:1px;background:#fff;"></div>
<div style="position:absolute;left:1152px;top:8px;width:1px;height:1px;background:#000;"></div>
<div style="position:absolute;left:1135px;top:10px;width:1px;height:1px;background:#fff;"></div>
<div style="position:absolute;left:1136px;top:11px;width:1px;height:1px;background:#000;"></div>
<div style="position:absolute;left:1138px;top:10px;width:1px;height:1px;background:#fff;"></div>
<div style="position:absolute;left:1139px;top:11px;width:1px;height:1px;background:#000;"></div>
<div style="position:absolute;left:1141px;top:10px;width:1px;height:1px;background:#fff;"></div>
<div style="position:absolute;left:1142px;top:11px;width:1px;height:1px;background:#000;"></div>
<div style="position:absolute;left:1144px;top:10px;width:1px;height:1px;background:#fff;"></div>
<div style="position:absolute;left:1145px;top:11px;width:1px;height:1px;background:#000;"></div>
<div style="position:absolute;left:1147px;top:10px;width:1px;height:1px;background:#fff;"></div>
<div style="position:absolute;left:1148px;top:11px;width:1px;height:1px;background:#000;"></div>
<div style="position:absolute;left:1150px;top:10px;width:1px;height:1px;background:#fff;"></div>
<div style="position:absolute;left:1151px;top:11px;width:1px;height:1px;background:#000;"></div>
<div style="position:absolute;left:1233px;top:2px;width:10px;height:11px;box-sizing:border-box;background:#ECE9D8;border-top:1px solid #fff;border-left:1px solid #fff;border-right:1px solid #716F64;border-bottom:1px solid #716F64"></div>
<div style="position:absolute;left:1234px;top:6px;width:8px;height:2px;background:#000;"></div>
<div style="position:absolute;left:1237px;top:3px;width:2px;height:8px;background:#000;"></div>
<div style="position:absolute;left:1247px;top:2px;width:10px;height:11px;box-sizing:border-box;background:#ECE9D8;border-top:1px solid #fff;border-left:1px solid #fff;border-right:1px solid #716F64;border-bottom:1px solid #716F64"></div>
<svg style="position:absolute;left:1247px;top:2px" width="10" height="11" shape-rendering="crispEdges"><path d="M1 4h3v1h-2v4h4v-2h1v3h-6z" fill="#000"/><rect x="1" y="4" width="1" height="6" fill="#000"/><rect x="1" y="9" width="6" height="1" fill="#000"/><rect x="3" y="6" width="1" height="1" fill="#000"/><path d="M4 1h5v5h-1v-3l-4 4v-1l3-4h-3z" fill="#000"/><rect x="7" y="1" width="2" height="2" fill="#000"/></svg>
<div style="position:absolute;left:1261px;top:2px;width:12px;height:11px;box-sizing:border-box;background:#ECE9D8;border-top:1px solid #fff;border-left:1px solid #fff;border-right:1px solid #716F64;border-bottom:1px solid #716F64"></div>
<svg style="position:absolute;left:1261px;top:2px" width="12" height="11"><path d="M2.5 2.5 L9.5 9 M9.5 2.5 L2.5 9" stroke="#000" stroke-width="1.8"/></svg>
<div style="position:absolute;left:595px;top:17px;width:662px;height:457px;background:#fff;"></div>
<div style="position:absolute;left:595px;top:17px;width:662px;height:17px;background:#ECE9D8;"></div>
<div style="position:absolute;left:595px;top:17px;width:662px;height:1px;background:#fff;"></div>
<div style="position:absolute;left:595px;top:17px;width:1px;height:16px;background:#fff;"></div>
<div style="position:absolute;left:595px;top:33px;width:662px;height:1px;background:#716F64;"></div>
<div style="position:absolute;left:1256px;top:17px;width:1px;height:17px;background:#716F64;"></div>
<div style="position:absolute;left:656px;top:18px;width:1px;height:15px;background:#716F64;"></div>
<div style="position:absolute;left:657px;top:18px;width:1px;height:15px;background:#fff;"></div>
<div class="s" style="left:616px;top:20px;">Ln#</div>
<div style="position:absolute;left:655px;top:36px;width:1px;height:437px;background:#ECE9D8;"></div>
<div style="position:absolute;left:594px;top:37px;width:663px;height:437px;overflow:hidden">
<div class="m" style="left:0;top:1px;width:36px;text-align:right;color:#000">57</div>
<div class="m" style="left:70px;top:1px;width:586px;height:15px;overflow:hidden"><span class="dash" style="width:16px"></span></div>
<div class="m" style="left:0;top:17px;width:36px;text-align:right;color:#000">58</div>
<div class="m" style="left:70px;top:17px;width:586px;height:15px;overflow:hidden"><span class="dash" style="width:16px"></span></div>
<div class="m" style="left:0;top:33px;width:36px;text-align:right;color:#000">59</div>
<div class="m" style="left:70px;top:33px;width:586px;height:15px;overflow:hidden"><span class="dash" style="width:16px"></span><span class="cm">         Description: Timer/Counter unit of the mc8051 microcontroller.</span></div>
<div class="m" style="left:0;top:49px;width:36px;text-align:right;color:#000">60</div>
<div class="m" style="left:70px;top:49px;width:586px;height:15px;overflow:hidden"><span class="dash" style="width:16px"></span></div>
<div class="m" style="left:0;top:65px;width:36px;text-align:right;color:#000">61</div>
<div class="m" style="left:70px;top:65px;width:586px;height:15px;overflow:hidden"><span class="dash" style="width:16px"></span></div>
<div class="m" style="left:0;top:81px;width:36px;text-align:right;color:#000">62</div>
<div class="m" style="left:70px;top:81px;width:586px;height:15px;overflow:hidden"><span class="dash" style="width:16px"></span></div>
<div class="m" style="left:0;top:97px;width:36px;text-align:right;color:#000">63</div>
<div class="m" style="left:70px;top:97px;width:586px;height:15px;overflow:hidden"><span class="dash" style="width:16px"></span></div>
<div class="m" style="left:0;top:113px;width:36px;text-align:right;color:#000">64</div>
<div class="m" style="left:70px;top:113px;width:586px;height:15px;overflow:hidden"><span class="dash" style="width:960px"></span></div>
<div class="m" style="left:0;top:129px;width:36px;text-align:right;color:#000">65</div>
<div style="position:absolute;left:70px;top:128px;width:288px;height:16px;background:#FFA500"></div>
<div class="m" style="left:70px;top:129px;width:586px;height:15px;overflow:hidden"><span class="kw">architecture</span><span class="bk"> rtl </span><span class="kw">of</span><span class="bk"> mc8051_tmrctr </span><span class="kw">is</span></div>
<div class="m" style="left:0;top:145px;width:36px;text-align:right;color:#000">66</div>
<div class="m" style="left:70px;top:145px;width:586px;height:15px;overflow:hidden"></div>
<div class="m" style="left:0;top:161px;width:36px;text-align:right;color:#000">67</div>
<div class="m" style="left:70px;top:161px;width:586px;height:15px;overflow:hidden"><span class="bk">  </span><span class="kw">signal</span><span class="bk"> </span><span class="id">s_pre_count</span><span class="bk">    </span><span class="op">:</span><span class="bk"> </span><span class="ty">unsigned</span><span class="op">(</span><span class="ty">3</span><span class="bk"> </span><span class="kw">downto</span><span class="bk"> </span><span class="ty">0</span><span class="op">)</span><span class="bk">;  </span><span class="dash" style="width:16px"></span><span class="cm"> these two signals provide</span></div>
<div class="m" style="left:0;top:177px;width:36px;text-align:right;color:#000">68</div>
<div class="m" style="left:70px;top:177px;width:586px;height:15px;overflow:hidden"><span class="bk">  </span><span class="kw">signal</span><span class="bk"> </span><span class="id">s_count_enable</span><span class="bk"> </span><span class="op">:</span><span class="bk"> </span><span class="ty">std_logic</span><span class="bk">;             </span><span class="dash" style="width:16px"></span><span class="cm"> a clock enable signal which</span></div>
<div class="m" style="left:0;top:193px;width:36px;text-align:right;color:#000">69</div>
<div class="m" style="left:70px;top:193px;width:586px;height:15px;overflow:hidden"><span class="bk">                                                 </span><span class="dash" style="width:16px"></span><span class="cm"> masks out every twelfth</span></div>
<div class="m" style="left:0;top:209px;width:36px;text-align:right;color:#000">70</div>
<div class="m" style="left:70px;top:209px;width:586px;height:15px;overflow:hidden"><span class="bk">                                                 </span><span class="dash" style="width:16px"></span><span class="cm"> rising edge of clk</span></div>
<div class="m" style="left:0;top:225px;width:36px;text-align:right;color:#000">71</div>
<div class="m" style="left:70px;top:225px;width:586px;height:15px;overflow:hidden"></div>
<div class="m" style="left:0;top:241px;width:36px;text-align:right;color:#000">72</div>
<div class="m" style="left:70px;top:241px;width:586px;height:15px;overflow:hidden"><span class="bk">  </span><span class="kw">signal</span><span class="bk"> </span><span class="id">s_count0</span><span class="bk">       </span><span class="op">:</span><span class="bk"> </span><span class="ty">unsigned</span><span class="op">(</span><span class="ty">15</span><span class="bk"> </span><span class="kw">downto</span><span class="bk"> </span><span class="ty">0</span><span class="op">)</span><span class="bk">; </span><span class="dash" style="width:16px"></span><span class="cm"> count for tmr/ctr0</span></div>
<div class="m" style="left:0;top:257px;width:36px;text-align:right;color:#000">73</div>
<div class="m" style="left:70px;top:257px;width:586px;height:15px;overflow:hidden"><span class="bk">  </span><span class="kw">signal</span><span class="bk"> </span><span class="id">s_countl0</span><span class="bk">      </span><span class="op">:</span><span class="bk"> </span><span class="ty">unsigned</span><span class="op">(</span><span class="ty">7</span><span class="bk"> </span><span class="kw">downto</span><span class="bk"> </span><span class="ty">0</span><span class="op">)</span><span class="bk">;  </span><span class="dash" style="width:16px"></span><span class="cm"> count register for tmr/ctr 0</span></div>
<div class="m" style="left:0;top:273px;width:36px;text-align:right;color:#000">74</div>
<div class="m" style="left:70px;top:273px;width:586px;height:15px;overflow:hidden"><span class="bk">  </span><span class="kw">signal</span><span class="bk"> </span><span class="id">s_counth0</span><span class="bk">      </span><span class="op">:</span><span class="bk"> </span><span class="ty">unsigned</span><span class="op">(</span><span class="ty">7</span><span class="bk"> </span><span class="kw">downto</span><span class="bk"> </span><span class="ty">0</span><span class="op">)</span><span class="bk">;  </span><span class="dash" style="width:16px"></span><span class="cm"> count register for tmr/ctr 0</span></div>
<div class="m" style="left:0;top:289px;width:36px;text-align:right;color:#000">75</div>
<div class="m" style="left:70px;top:289px;width:586px;height:15px;overflow:hidden"><span class="bk">  </span><span class="kw">signal</span><span class="bk"> </span><span class="id">s_count1</span><span class="bk">       </span><span class="op">:</span><span class="bk"> </span><span class="ty">unsigned</span><span class="op">(</span><span class="ty">15</span><span class="bk"> </span><span class="kw">downto</span><span class="bk"> </span><span class="ty">0</span><span class="op">)</span><span class="bk">; </span><span class="dash" style="width:16px"></span><span class="cm"> count for tmr/ctr1</span></div>
<div class="m" style="left:0;top:305px;width:36px;text-align:right;color:#000">76</div>
<div class="m" style="left:70px;top:305px;width:586px;height:15px;overflow:hidden"><span class="bk">  </span><span class="kw">signal</span><span class="bk"> </span><span class="id">s_countl1</span><span class="bk">      </span><span class="op">:</span><span class="bk"> </span><span class="ty">unsigned</span><span class="op">(</span><span class="ty">7</span><span class="bk"> </span><span class="kw">downto</span><span class="bk"> </span><span class="ty">0</span><span class="op">)</span><span class="bk">;  </span><span class="dash" style="width:16px"></span><span class="cm"> count register for tmr/ctr 1</span></div>
<div class="m" style="left:0;top:321px;width:36px;text-align:right;color:#000">77</div>
<div class="m" style="left:70px;top:321px;width:586px;height:15px;overflow:hidden"><span class="bk">  </span><span class="kw">signal</span><span class="bk"> </span><span class="id">s_counth1</span><span class="bk">      </span><span class="op">:</span><span class="bk"> </span><span class="ty">unsigned</span><span class="op">(</span><span class="ty">7</span><span class="bk"> </span><span class="kw">downto</span><span class="bk"> </span><span class="ty">0</span><span class="op">)</span><span class="bk">;  </span><span class="dash" style="width:16px"></span><span class="cm"> count register for tmr/ctr 1</span></div>
<div class="m" style="left:0;top:337px;width:36px;text-align:right;color:#000">78</div>
<div class="m" style="left:70px;top:337px;width:586px;height:15px;overflow:hidden"><span class="bk">  </span><span class="kw">signal</span><span class="bk"> </span><span class="id">s_gate0</span><span class="bk">        </span><span class="op">:</span><span class="bk"> </span><span class="ty">std_logic</span><span class="bk">;             </span><span class="dash" style="width:16px"></span><span class="cm"> gate bit for tmr/ctr 0</span></div>
<div class="m" style="left:0;top:353px;width:36px;text-align:right;color:#000">79</div>
<div class="m" style="left:70px;top:353px;width:586px;height:15px;overflow:hidden"><span class="bk">  </span><span class="kw">signal</span><span class="bk"> </span><span class="id">s_gate1</span><span class="bk">        </span><span class="op">:</span><span class="bk"> </span><span class="ty">std_logic</span><span class="bk">;             </span><span class="dash" style="width:16px"></span><span class="cm"> gate bit for tmr/ctr 1</span></div>
<div class="m" style="left:0;top:369px;width:36px;text-align:right;color:#000">80</div>
<div class="m" style="left:70px;top:369px;width:586px;height:15px;overflow:hidden"><span class="bk">  </span><span class="kw">signal</span><span class="bk"> </span><span class="id">s_c_t0</span><span class="bk">         </span><span class="op">:</span><span class="bk"> </span><span class="ty">std_logic</span><span class="bk">;             </span><span class="dash" style="width:16px"></span><span class="cm"> tmr/ctr 0 is timer if 0</span></div>
<div class="m" style="left:0;top:385px;width:36px;text-align:right;color:#000">81</div>
<div class="m" style="left:70px;top:385px;width:586px;height:15px;overflow:hidden"><span class="bk">  </span><span class="kw">signal</span><span class="bk"> </span><span class="id">s_c_t1</span><span class="bk">         </span><span class="op">:</span><span class="bk"> </span><span class="ty">std_logic</span><span class="bk">;             </span><span class="dash" style="width:16px"></span><span class="cm"> tmr/ctr 1 is timer if 0</span></div>
<div class="m" style="left:0;top:401px;width:36px;text-align:right;color:#000">82</div>
<div class="m" style="left:70px;top:401px;width:586px;height:15px;overflow:hidden"><span class="bk">  </span><span class="kw">signal</span><span class="bk"> </span><span class="id">s_tmr_ctr0_en</span><span class="bk">  </span><span class="op">:</span><span class="bk"> </span><span class="ty">std_logic</span><span class="bk">;             </span><span class="dash" style="width:16px"></span><span class="cm"> starts tmr/ctr 0 if 1</span></div>
<div class="m" style="left:0;top:417px;width:36px;text-align:right;color:#000">83</div>
<div class="m" style="left:70px;top:417px;width:586px;height:15px;overflow:hidden"><span class="bk">  </span><span class="kw">signal</span><span class="bk"> </span><span class="id">s_tmr_ctr1_en</span><span class="bk">  </span><span class="op">:</span><span class="bk"> </span><span class="ty">std_logic</span><span class="bk">;             </span><span class="dash" style="width:16px"></span><span class="cm"> starts tmr/ctr 1 if 1</span></div>
</div>
<div class="track" style="position:absolute;left:1257px;top:34px;width:18px;height:423px"></div>
<div class="btn" style="left:1257px;top:17px;width:18px;height:17px"></div>
<svg style="position:absolute;left:1263px;top:23px" width="7" height="4" shape-rendering="crispEdges"><path d="M3 0h1v1h1v1h1v1h1v1H0V3h1V2h1V1h1z" fill="#000"/></svg>
<div class="btn" style="left:1257px;top:65px;width:18px;height:16px"></div>
<div class="btn" style="left:1257px;top:457px;width:18px;height:17px"></div>
<svg style="position:absolute;left:1263px;top:464px" width="7" height="4" shape-rendering="crispEdges"><path d="M0 0h7v1h-1v1h-1v1h-1v1h-1v-1h-1v-1h-1v-1h-1z" fill="#000"/></svg>
<div class="track" style="position:absolute;left:657px;top:474px;width:600px;height:18px"></div>
<div class="btn" style="left:657px;top:474px;width:17px;height:18px"></div>
<svg style="position:absolute;left:662px;top:480px" width="4" height="7" shape-rendering="crispEdges"><path d="M3 0h1v7h-1v-1h-1v-1h-1v-1h-1v-1h1v-1h1v-1h1z" fill="#000"/></svg>
<div class="btn" style="left:674px;top:474px;width:524px;height:18px"></div>
<div class="btn" style="left:1240px;top:474px;width:17px;height:18px"></div>
<svg style="position:absolute;left:1247px;top:480px" width="4" height="7" shape-rendering="crispEdges"><path d="M0 0h1v1h1v1h1v1h1v1h-1v1h-1v1h-1v1h-1z" fill="#000"/></svg>
<div style="position:absolute;left:1275px;top:0px;width:1px;height:494px;background:#ACA899;"></div>
<div style="position:absolute;left:1276px;top:0px;width:1px;height:494px;background:#fff;"></div>
<div style="position:absolute;left:0px;top:502px;width:1275px;height:17px;background:#0054E3;"></div>
<svg style="position:absolute;left:1px;top:503px" width="14" height="15" shape-rendering="crispEdges"><path d="M4 0h6v1h2v1h1v2h1v10h-2v-1h-2v1H4v-1H2v1H0V4h1V2h1V1h2z" fill="#B8ADA2"/><rect x="0" y="4" width="1" height="3" fill="#3A2A1A"/><rect x="13" y="4" width="1" height="3" fill="#3A2A1A"/><rect x="0" y="10" width="1" height="4" fill="#3A2A1A"/><rect x="13" y="10" width="1" height="4" fill="#3A2A1A"/><rect x="5" y="3" width="5" height="4" fill="#fff"/><rect x="2" y="3" width="2" height="7" fill="#D8D4D0"/><rect x="10" y="3" width="2" height="7" fill="#D8D4D0"/><rect x="4" y="11" width="6" height="3" fill="#0054E3"/></svg>
<div class="s" style="left:19px;top:505px;color:#fff">Transcript</div>
<div style="position:absolute;left:73px;top:506px;width:567px;height:1px;background:#7EA8F8;"></div>
<div style="position:absolute;left:73px;top:508px;width:567px;height:1px;background:#000000;"></div>
<div style="position:absolute;left:73px;top:511px;width:567px;height:1px;background:#7EA8F8;"></div>
<div style="position:absolute;left:73px;top:513px;width:567px;height:1px;background:#000000;"></div>
<div style="position:absolute;left:662px;top:506px;width:567px;height:1px;background:#7EA8F8;"></div>
<div style="position:absolute;left:662px;top:508px;width:567px;height:1px;background:#000000;"></div>
<div style="position:absolute;left:662px;top:511px;width:567px;height:1px;background:#7EA8F8;"></div>
<div style="position:absolute;left:662px;top:513px;width:567px;height:1px;background:#000000;"></div>
<div style="position:absolute;left:642px;top:506px;width:1px;height:1px;background:#fff;"></div>
<div style="position:absolute;left:643px;top:507px;width:1px;height:1px;background:#000;"></div>
<div style="position:absolute;left:645px;top:506px;width:1px;height:1px;background:#fff;"></div>
<div style="position:absolute;left:646px;top:507px;width:1px;height:1px;background:#000;"></div>
<div style="position:absolute;left:648px;top:506px;width:1px;height:1px;background:#fff;"></div>
<div style="position:absolute;left:649px;top:507px;width:1px;height:1px;background:#000;"></div>
<div style="position:absolute;left:651px;top:506px;width:1px;height:1px;background:#fff;"></div>
<div style="position:absolute;left:652px;top:507px;width:1px;height:1px;background:#000;"></div>
<div style="position:absolute;left:654px;top:506px;width:1px;height:1px;background:#fff;"></div>
<div style="position:absolute;left:655px;top:507px;width:1px;height:1px;background:#000;"></div>
<div style="position:absolute;left:657px;top:506px;width:1px;height:1px;background:#fff;"></div>
<div style="position:absolute;left:658px;top:507px;width:1px;height:1px;background:#000;"></div>
<div style="position:absolute;left:643px;top:509px;width:1px;height:1px;background:#fff;"></div>
<div style="position:absolute;left:644px;top:510px;width:1px;height:1px;background:#000;"></div>
<div style="position:absolute;left:646px;top:509px;width:1px;height:1px;background:#fff;"></div>
<div style="position:absolute;left:647px;top:510px;width:1px;height:1px;background:#000;"></div>
<div style="position:absolute;left:649px;top:509px;width:1px;height:1px;background:#fff;"></div>
<div style="position:absolute;left:650px;top:510px;width:1px;height:1px;background:#000;"></div>
<div style="position:absolute;left:652px;top:509px;width:1px;height:1px;background:#fff;"></div>
<div style="position:absolute;left:653px;top:510px;width:1px;height:1px;background:#000;"></div>
<div style="position:absolute;left:655px;top:509px;width:1px;height:1px;background:#fff;"></div>
<div style="position:absolute;left:656px;top:510px;width:1px;height:1px;background:#000;"></div>
<div style="position:absolute;left:658px;top:509px;width:1px;height:1px;background:#fff;"></div>
<div style="position:absolute;left:659px;top:510px;width:1px;height:1px;background:#000;"></div>
<div style="position:absolute;left:642px;top:512px;width:1px;height:1px;background:#fff;"></div>
<div style="position:absolute;left:643px;top:513px;width:1px;height:1px;background:#000;"></div>
<div style="position:absolute;left:645px;top:512px;width:1px;height:1px;background:#fff;"></div>
<div style="position:absolute;left:646px;top:513px;width:1px;height:1px;background:#000;"></div>
<div style="position:absolute;left:648px;top:512px;width:1px;height:1px;background:#fff;"></div>
<div style="position:absolute;left:649px;top:513px;width:1px;height:1px;background:#000;"></div>
<div style="position:absolute;left:651px;top:512px;width:1px;height:1px;background:#fff;"></div>
<div style="position:absolute;left:652px;top:513px;width:1px;height:1px;background:#000;"></div>
<div style="position:absolute;left:654px;top:512px;width:1px;height:1px;background:#fff;"></div>
<div style="position:absolute;left:655px;top:513px;width:1px;height:1px;background:#000;"></div>
<div style="position:absolute;left:657px;top:512px;width:1px;height:1px;background:#fff;"></div>
<div style="position:absolute;left:658px;top:513px;width:1px;height:1px;background:#000;"></div>
<div style="position:absolute;left:1233px;top:505px;width:10px;height:11px;box-sizing:border-box;background:#ECE9D8;border-top:1px solid #fff;border-left:1px solid #fff;border-right:1px solid #716F64;border-bottom:1px solid #716F64"></div>
<div style="position:absolute;left:1234px;top:509px;width:8px;height:2px;background:#000;"></div>
<div style="position:absolute;left:1237px;top:506px;width:2px;height:8px;background:#000;"></div>
<div style="position:absolute;left:1247px;top:505px;width:10px;height:11px;box-sizing:border-box;background:#ECE9D8;border-top:1px solid #fff;border-left:1px solid #fff;border-right:1px solid #716F64;border-bottom:1px solid #716F64"></div>
<svg style="position:absolute;left:1247px;top:505px" width="10" height="11" shape-rendering="crispEdges"><path d="M1 4h3v1h-2v4h4v-2h1v3h-6z" fill="#000"/><rect x="1" y="4" width="1" height="6" fill="#000"/><rect x="1" y="9" width="6" height="1" fill="#000"/><rect x="3" y="6" width="1" height="1" fill="#000"/><path d="M4 1h5v5h-1v-3l-4 4v-1l3-4h-3z" fill="#000"/><rect x="7" y="1" width="2" height="2" fill="#000"/></svg>
<div style="position:absolute;left:1261px;top:505px;width:12px;height:11px;box-sizing:border-box;background:#ECE9D8;border-top:1px solid #fff;border-left:1px solid #fff;border-right:1px solid #716F64;border-bottom:1px solid #716F64"></div>
<svg style="position:absolute;left:1261px;top:505px" width="12" height="11"><path d="M2.5 2.5 L9.5 9 M9.5 2.5 L2.5 9" stroke="#000" stroke-width="1.8"/></svg>
<div style="position:absolute;left:2px;top:520px;width:1253px;height:293px;background:#fff;"></div>
<div style="position:absolute;left:1px;top:519px;width:1254px;height:1px;background:#000;"></div>
<div style="position:absolute;left:1px;top:519px;width:1px;height:294px;background:#000;"></div>
<div style="position:absolute;left:1255px;top:519px;width:1px;height:294px;background:#E4E2DA;"></div>
<div class="t" style="left:5px;top:524px;">#</div>
<div class="t" style="left:5px;top:539px;"># vlog -vlog01compat -work work +incdir+D:/Michael/FPGA_DESIGN/mc8051_20161109/db {D:/Michael/FPGA_DESIGN/mc8051_20161109/db/mc8051_altera_altpll_altpll.v}</div>
<div class="t" style="left:5px;top:554px;"># Model Technology ModelSim ALTERA vlog 10.0c Compiler 2011.09 Sep 21 2011</div>
<div class="t" style="left:5px;top:569px;"># -- Compiling module mc8051_altera_altpll_altpll</div>
<div class="t" style="left:5px;top:584px;">#</div>
<div class="t" style="left:5px;top:599px;"># Top level modules:</div>
<div class="t" style="left:5px;top:614px;">#       mc8051_altera_altpll_altpll</div>
<div class="t" style="left:5px;top:629px;"># vcom -93 -work work {D:/Michael/FPGA_DESIGN/mc8051_20161109/mc8051_src/mc8051_tmrctr_rtl.vhd}</div>
<div class="t" style="left:5px;top:644px;"># Model Technology ModelSim ALTERA vcom 10.0c Compiler 2011.09 Sep 21 2011</div>
<div class="t" style="left:5px;top:659px;"># -- Loading package STANDARD</div>
<div class="t" style="left:5px;top:674px;"># -- Compiling architecture rtl of mc8051_tmrctr</div>
<div class="t" style="left:5px;top:689px;color:#FF0000"># ** Error: (vcom-11) Could not find work.mc8051_tmrctr.</div>
<div class="t" style="left:5px;top:704px;color:#FF0000"># ** Error: D:/Michael/FPGA_DESIGN/mc8051_20161109/mc8051_src/mc8051_tmrctr_rtl.vhd(65): VHDL Compiler exiting</div>
<div class="t" style="left:5px;top:719px;color:#FF0000"># ** Error: E:/altera/11.1/modelsim_ae/win32aloem/vcom failed.</div>
<div class="t" style="left:5px;top:734px;"># Error in macro ./mc8051_run_msim_rtl_vhdl.do line 9</div>
<div class="t" style="left:5px;top:749px;"># E:/altera/11.1/modelsim_ae/win32aloem/vcom failed.</div>
<div class="t" style="left:5px;top:764px;">#     while executing</div>
<div class="t" style="left:5px;top:779px;"># &quot;vcom -93 -work work {D:/Michael/FPGA_DESIGN/mc8051_20161109/mc8051_src/mc8051_tmrctr_rtl.vhd}&quot;</div>
<div class="t" style="left:5px;top:794px;">#</div>
<div class="track" style="position:absolute;left:1258px;top:536px;width:17px;height:277px"></div>
<div class="btn" style="left:1258px;top:519px;width:17px;height:17px"></div>
<svg style="position:absolute;left:1263px;top:525px" width="7" height="4" shape-rendering="crispEdges"><path d="M3 0h1v1h1v1h1v1h1v1H0V3h1V2h1V1h1z" fill="#000"/></svg>
<div class="btn" style="left:1258px;top:639px;width:17px;height:200px"></div>
<div style="position:absolute;left:1276px;top:502px;width:1px;height:311px;background:#fff;"></div>
<div style="position:absolute;left:572px;top:760px;font-family:'Liberation Serif',serif;font-size:31px;line-height:34px;color:#8030E0;transform:scaleX(0.85);transform-origin:left top">E</div>
<div style="position:absolute;left:601px;top:760px;font-family:'Liberation Serif',serif;font-size:31px;line-height:34px;color:#8030E0;transform:scaleX(0.85);transform-origin:left top">E</div>
<div style="position:absolute;left:630px;top:760px;font-family:'Liberation Serif',serif;font-size:31px;line-height:34px;color:#8030E0;transform:scaleX(0.85);transform-origin:left top">T</div>
<div style="position:absolute;left:659px;top:760px;font-family:'Liberation Serif',serif;font-size:31px;line-height:34px;color:#8030E0;transform:scaleX(0.85);transform-origin:left top">O</div>
<div style="position:absolute;left:689px;top:760px;font-family:'Liberation Serif',serif;font-size:31px;line-height:34px;color:#8030E0;transform:scaleX(0.85);transform-origin:left top">P</div>
<svg style="position:absolute;left:578px;top:795px" width="122" height="13" fill="none" stroke="#9C9C9C" stroke-width="1.7" stroke-linecap="square"><path transform="translate(0.0,0)" d="M2 3.5H10V8H2Z M6 0.5V12"/><path transform="translate(13.3,0)" d="M1 1H11V11.5H1Z M3 3.5H9 M3.5 6.5H8.5 M2.5 9H9.5 M6 3.5V9 M7.5 7.5L8.5 8.5"/><path transform="translate(26.6,0)" d="M2 2.5H10V8.5H2Z M2 5.5H10 M6 0.5V10.5Q6 11.5 7.5 11.5H11.5V9.5"/><path transform="translate(39.9,0)" d="M2 1.5H10L6.5 4.5 M6 4.5V10.5Q6 11.5 4.5 11.5 M1 6.5H11"/><path transform="translate(53.2,0)" d="M0.5 2H5 M3 2V11L1.5 10.5 M6 1.5H12 M9 1.5L8.5 3.5 M7 3.5H11V9H7Z M7 6.2H11 M8 9L6.5 11.5 M10 9L11.8 11.5"/><path transform="translate(66.5,0)" d="M3 0.5L1 4.5H3.5L1 8H4.5 M0.5 11.5L4.5 10 M5.5 1.5H10L9 4H11.5L8 9L11.5 11.5 M7 1.5V6Q6.5 10 5 11.5 M8 6.5L6 11"/><path transform="translate(79.8,0)" d="M1 2H11 M0.5 6.5H11.5 M4.5 2V8Q4.5 10.5 2 11.5 M8 2V11.5"/><path transform="translate(93.1,0)" d="M2 1.5L2.5 4 M0.5 4.5H11.5 M8 1L10 3 M5.5 1V5.5Q4 10 1 11.5 M4 6.5H10L6 11 M6.5 8L11 11.5"/><path transform="translate(106.4,0)" d="M1 11.5V1H11V10.5Q11 11.5 9.5 11.5 M3 3.5L6 8.5 M6 3.5L3 8.5 M6.5 3.5L9.5 8.5 M9.5 3.5L6.5 8.5"/></svg>
<div style="position:absolute;left:1258px;top:703px;width:46px;height:46px;border-radius:50%;background:radial-gradient(circle at 45% 30%,#7FE08A,#4CC85C 45%,#3DB04C);border:2px solid #E8E8E8;box-shadow:0 0 0 1px #A8A8A8,inset 0 0 0 1px #1E8A3A;box-sizing:border-box"></div>
<div style="position:absolute;left:1264px;top:717px;font-family:'Liberation Serif',serif;font-weight:bold;font-size:15px;line-height:18px;color:#fff;text-shadow:0 0 1px #1A5A2A">65</div>
</body></html>
